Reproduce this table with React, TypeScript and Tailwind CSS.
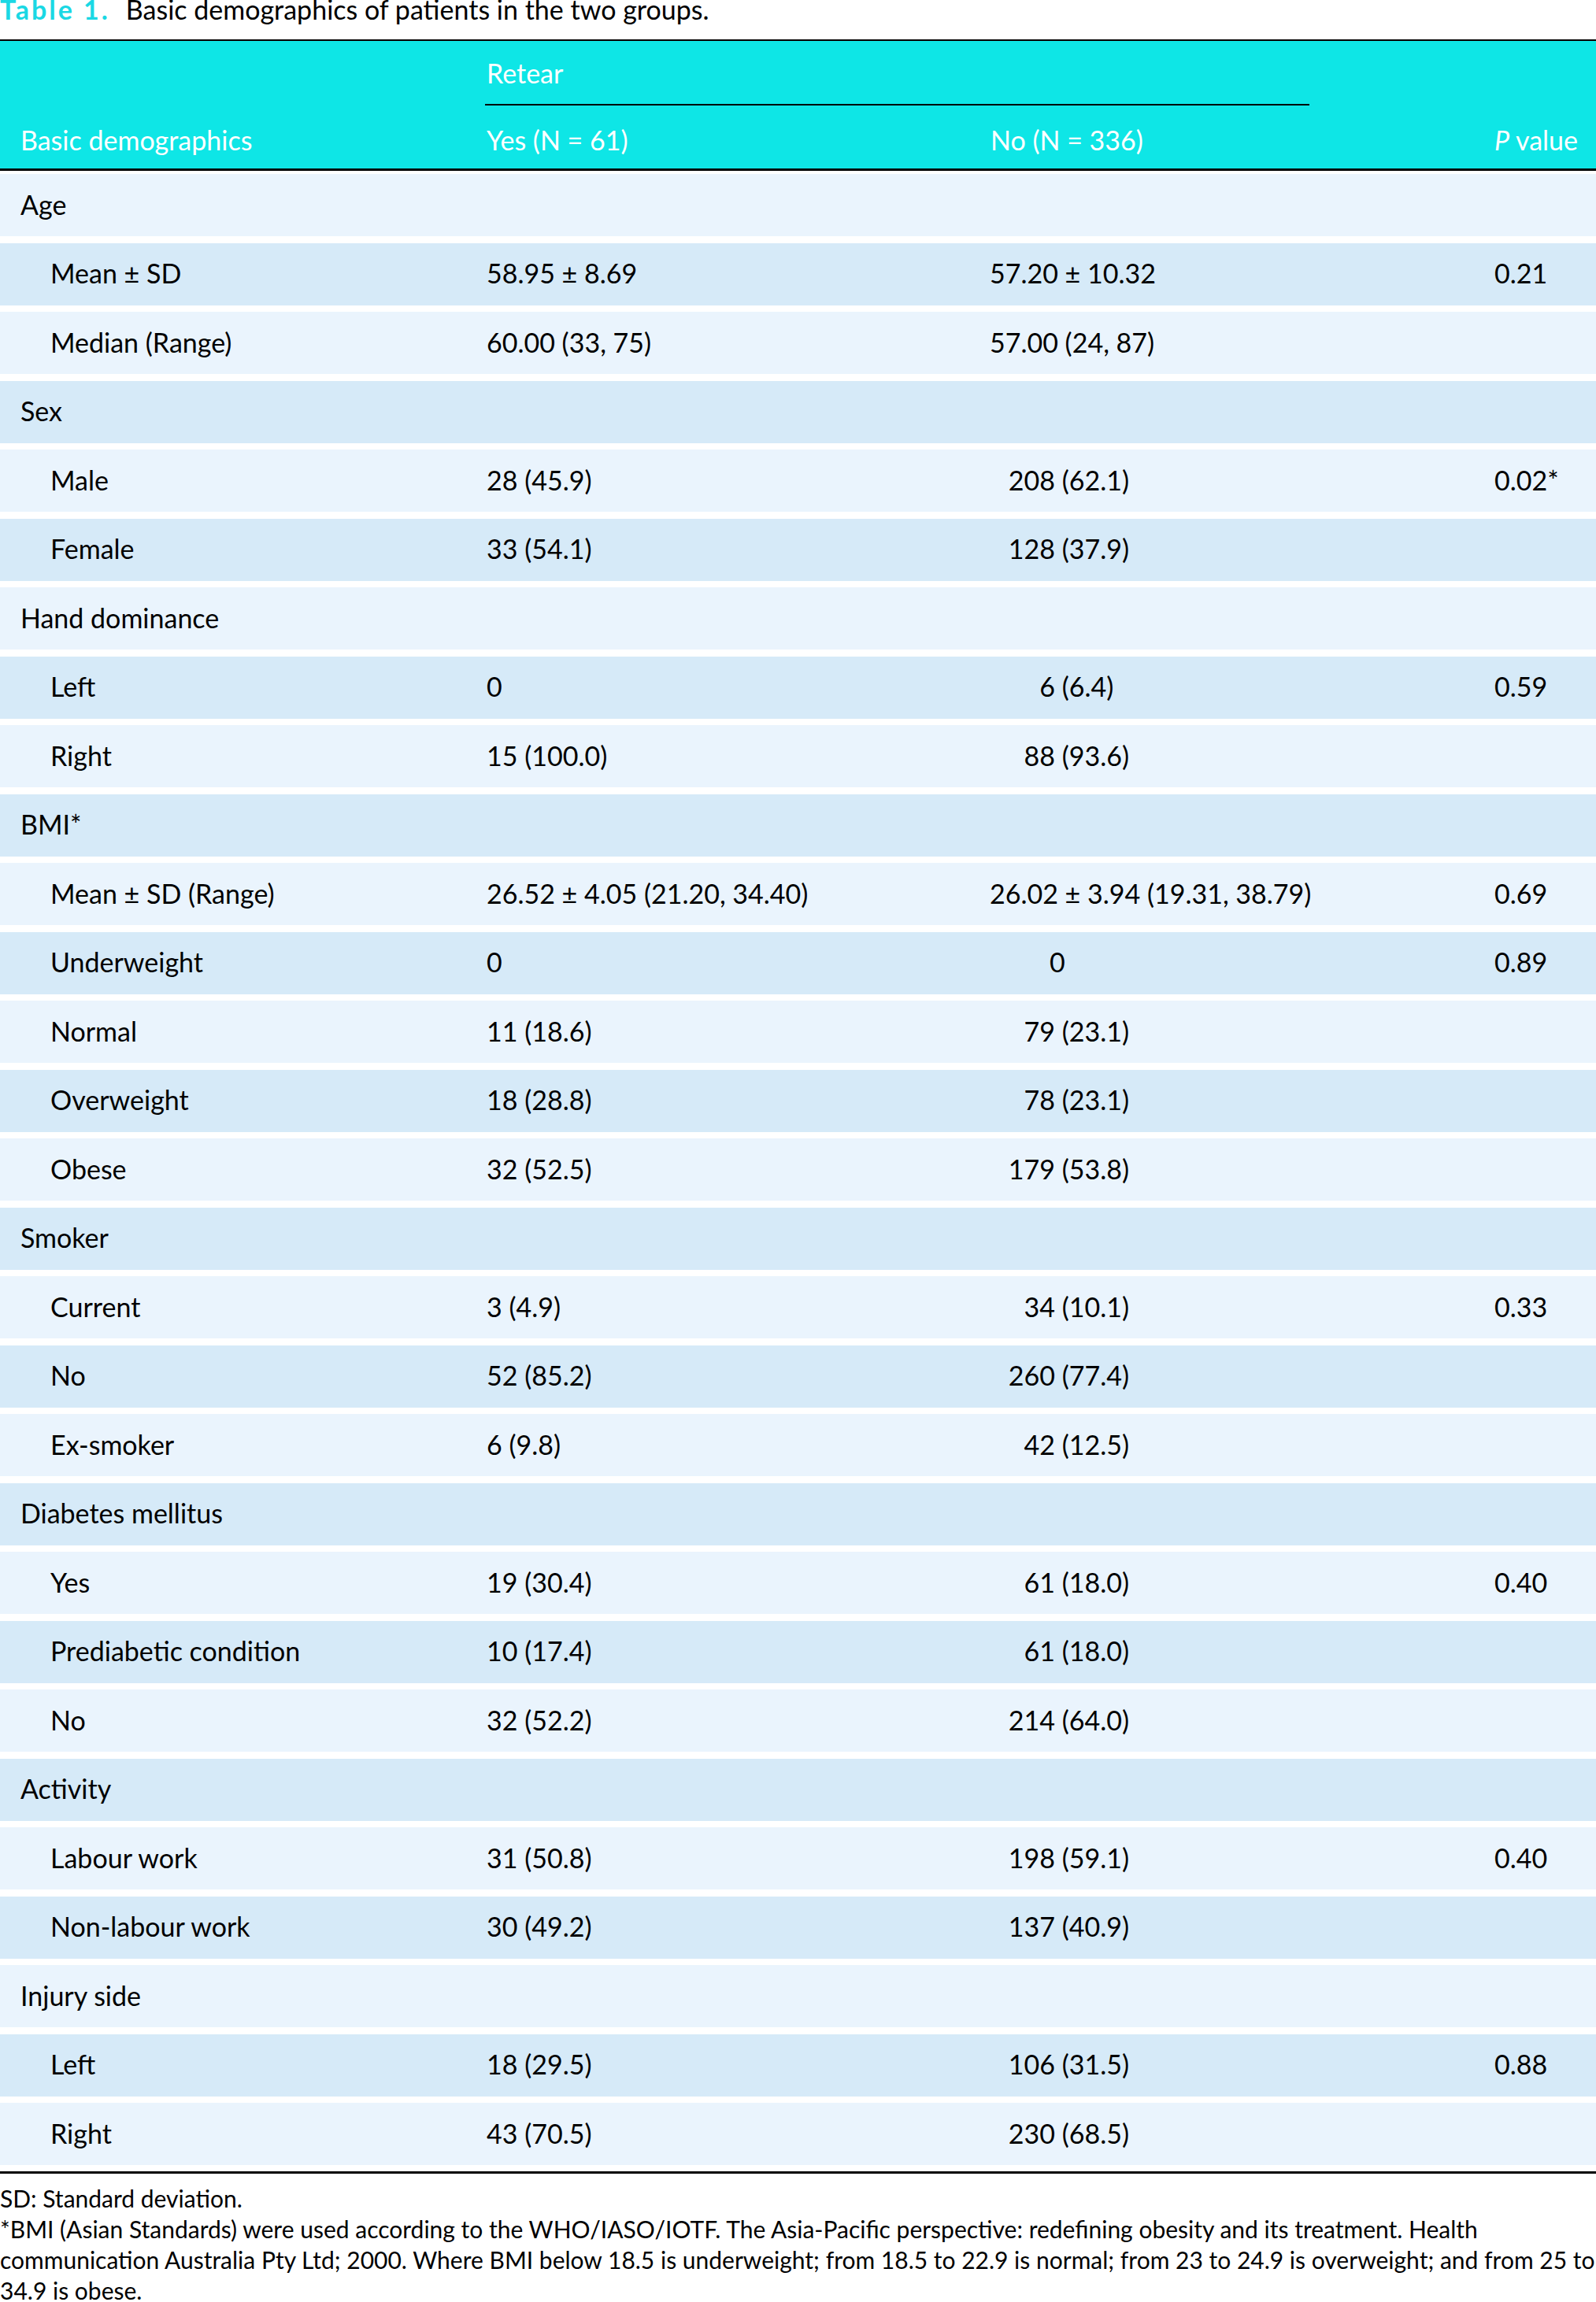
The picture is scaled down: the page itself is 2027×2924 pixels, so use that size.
import React from 'react';

interface Row {
  label: string;
  group?: boolean;
  yes?: string;
  no?: string;
  p?: string;
}

const rows: Row[] = [
  { label: 'Age', group: true },
  { label: 'Mean ± SD', yes: '58.95 ± 8.69', no: '57.20 ± 10.32', p: '0.21' },
  { label: 'Median (Range)', yes: '60.00 (33, 75)', no: '57.00 (24, 87)' },
  { label: 'Sex', group: true },
  { label: 'Male', yes: '28 (45.9)', no: '208 (62.1)', p: '0.02*' },
  { label: 'Female', yes: '33 (54.1)', no: '128 (37.9)' },
  { label: 'Hand dominance', group: true },
  { label: 'Left', yes: '0', no: '6 (6.4)', p: '0.59' },
  { label: 'Right', yes: '15 (100.0)', no: '88 (93.6)' },
  { label: 'BMI*', group: true },
  { label: 'Mean ± SD (Range)', yes: '26.52 ± 4.05 (21.20, 34.40)', no: '26.02 ± 3.94 (19.31, 38.79)', p: '0.69' },
  { label: 'Underweight', yes: '0', no: '0', p: '0.89' },
  { label: 'Normal', yes: '11 (18.6)', no: '79 (23.1)' },
  { label: 'Overweight', yes: '18 (28.8)', no: '78 (23.1)' },
  { label: 'Obese', yes: '32 (52.5)', no: '179 (53.8)' },
  { label: 'Smoker', group: true },
  { label: 'Current', yes: '3 (4.9)', no: '34 (10.1)', p: '0.33' },
  { label: 'No', yes: '52 (85.2)', no: '260 (77.4)' },
  { label: 'Ex-smoker', yes: '6 (9.8)', no: '42 (12.5)' },
  { label: 'Diabetes mellitus', group: true },
  { label: 'Yes', yes: '19 (30.4)', no: '61 (18.0)', p: '0.40' },
  { label: 'Prediabetic condition', yes: '10 (17.4)', no: '61 (18.0)' },
  { label: 'No', yes: '32 (52.2)', no: '214 (64.0)' },
  { label: 'Activity', group: true },
  { label: 'Labour work', yes: '31 (50.8)', no: '198 (59.1)', p: '0.40' },
  { label: 'Non-labour work', yes: '30 (49.2)', no: '137 (40.9)' },
  { label: 'Injury side', group: true },
  { label: 'Left', yes: '18 (29.5)', no: '106 (31.5)', p: '0.88' },
  { label: 'Right', yes: '43 (70.5)', no: '230 (68.5)' },
];

// "No" column lines up on the opening bracket, so the count is right-aligned
function NoCell({ value }: { value?: string }) {
  if (!value) return null;
  if (value === '0') return <span className="pl-[76px]">0</span>;
  const m = value.match(/^(\d+) (\(.*\))$/);
  if (!m) return <span>{value}</span>;
  return (
    <span className="whitespace-nowrap">
      <span className="inline-block w-[83px] text-right">{m[1]}</span> {m[2]}
    </span>
  );
}

export default function App() {
  return (
    <div className="w-[2027px] h-[2924px] overflow-hidden bg-white text-black font-['Lato','Open_Sans',sans-serif]">
      {/* caption */}
      <div className="h-[50px] overflow-hidden">
        <div className="-mt-[5px] text-[34px] leading-[34px] whitespace-nowrap">
          <span className="font-bold tracking-[3px] text-[#1ad8e4]">Table 1.</span>
          <span className="ml-[20px]">Basic demographics of patients in the two groups.</span>
        </div>
      </div>

      {/* header */}
      <div className="border-t-2 border-b-[3px] border-black bg-[#0ee6e6] text-white text-[34px] leading-[34px]">
        <div className="grid grid-cols-[616px_641px_641px_1fr] h-[82px]">
          <div />
          <div className="col-span-2 flex items-end pl-[2px] pb-[22px] border-b-2 border-black w-[1047px]">Retear</div>
          <div />
        </div>
        <div className="grid grid-cols-[616px_641px_641px_1fr] h-[80px] items-end pb-[19px]">
          <div className="pl-[26px]">Basic demographics</div>
          <div className="pl-[2px]">Yes (N = 61)</div>
          <div className="pl-[1px]">No (N = 336)</div>
          <div>
            <span className="italic">P</span> value
          </div>
        </div>
      </div>

      {/* body */}
      <div className="flex flex-col gap-[8.5px] pt-[4px] pb-[8px] border-b-[3px] border-black text-[34px] leading-[34px]">
        {rows.map((r, i) => (
          <div
            key={i}
            className={`grid grid-cols-[616px_641px_641px_1fr] h-[79px] items-center pb-[2px] ${i % 2 === 0 ? 'bg-[#eaf4fd]' : 'bg-[#d6eaf8]'}`}
          >
            <div className={r.group ? 'pl-[26px]' : 'pl-[64px]'}>{r.label}</div>
            <div className="pl-[2px] whitespace-nowrap">{r.yes}</div>
            <div>
              <NoCell value={r.no} />
            </div>
            <div>{r.p}</div>
          </div>
        ))}
      </div>

      {/* footnotes */}
      <div className="mt-[12px] text-[30px] leading-[39px] whitespace-nowrap">
        <div>SD: Standard deviation.</div>
        <div>
          *BMI (Asian Standards) were used according to the WHO/IASO/IOTF. The Asia-Pacific perspective: redefining obesity and its treatment. Health
        </div>
        <div>
          communication Australia Pty Ltd; 2000. Where BMI below 18.5 is underweight; from 18.5 to 22.9 is normal; from 23 to 24.9 is overweight; and from 25 to
        </div>
        <div>34.9 is obese.</div>
      </div>
    </div>
  );
}
